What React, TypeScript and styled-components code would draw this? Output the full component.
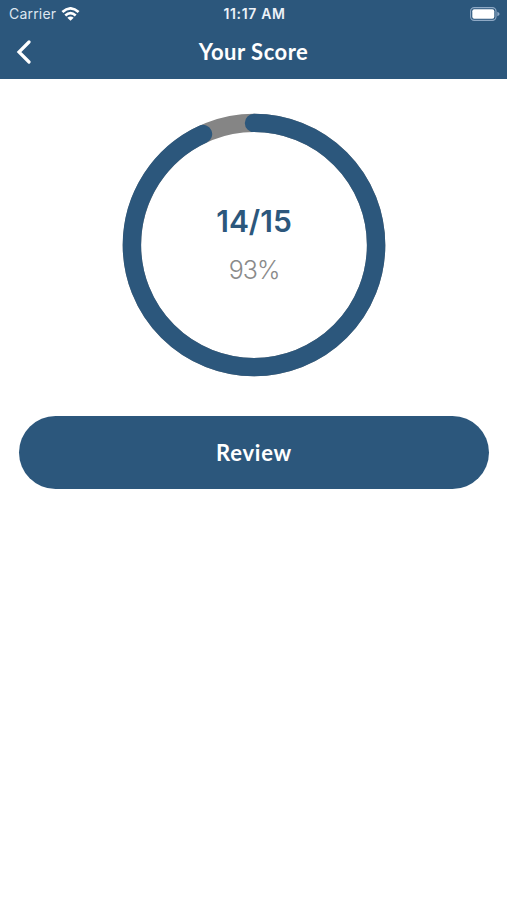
import React from "react";
import styled, { createGlobalStyle } from "styled-components";

const BLUE = "#2c577c";

const GlobalStyle = createGlobalStyle`
  * { box-sizing: border-box; }
  body { margin: 0; background: #fff; }
`;

const Screen = styled.div`
  width: 100%;
  height: 900px;
  background: #fff;
  overflow: hidden;
  font-family: Inter, sans-serif;
`;

const Header = styled.header`
  height: 79px;
  background: ${BLUE};
  color: #fff;
`;

const StatusBar = styled.div`
  display: grid;
  grid-template-columns: 1fr auto 1fr;
  align-items: center;
  height: 27px;
  padding: 0 7px 0 9px;
`;

const Carrier = styled.div`
  display: flex;
  align-items: center;
  gap: 5px;
  color: #dde6f0;
  font-size: 14px;
  letter-spacing: 0.2px;
`;

const Clock = styled.time`
  color: #edf2f8;
  font-size: 14px;
  font-weight: 600;
  letter-spacing: 0.65px;
`;

const BatterySlot = styled.div`
  display: flex;
  justify-content: flex-end;
`;

const NavBar = styled.div`
  display: grid;
  grid-template-columns: 48px 1fr 48px;
  align-items: center;
  height: 50px;
`;

const BackButton = styled.button`
  display: flex;
  padding: 0 0 0 16px;
  border: 0;
  background: none;
`;

const Title = styled.h1`
  margin: 0;
  text-align: center;
  font: 700 22px/30px Lato, sans-serif;
  letter-spacing: 0.5px;
`;

const Content = styled.main`
  display: flex;
  flex-direction: column;
  align-items: center;
  padding: 34px 18px 0 19px;
`;

const Gauge = styled.div`
  display: grid;
  place-items: center;
  width: 264px;
  height: 264px;
  > * { grid-area: 1 / 1; }
`;

const Scores = styled.div`
  display: flex;
  flex-direction: column;
  align-items: center;
  gap: 13px;
`;

const Score = styled.div`
  color: ${BLUE};
  font-size: 30px;
  font-weight: 600;
  line-height: 36px;
`;

const Percent = styled.div`
  color: #8a8a8a;
  font-size: 25px;
  font-weight: 300;
  line-height: 36px;
  letter-spacing: -1px;
`;

const ReviewButton = styled.button`
  width: 100%;
  height: 73px;
  margin-top: 38.5px;
  padding: 2px 0 0;
  border: 0;
  border-radius: 37px;
  background: ${BLUE};
  color: #fff;
  font: 700 22px/30px Lato, sans-serif;
  letter-spacing: 0.8px;
`;

const RADIUS = 122.1;

function Ring({ value }: { value: number }) {
  const length = 2 * Math.PI * RADIUS;
  return (
    <svg width="264" height="264" viewBox="0 0 264 264" fill="none" strokeWidth="18.4">
      <circle cx="132" cy="132" r={RADIUS} stroke="#858585" />
      <circle
        cx="132"
        cy="132"
        r={RADIUS}
        stroke={BLUE}
        strokeLinecap="round"
        strokeDasharray={`${length * value} ${length}`}
        transform="rotate(-90 132 132)"
      />
    </svg>
  );
}

function WifiIcon() {
  return (
    <svg width="19" height="14" viewBox="0 0 18 14" fill="none" stroke="#fff" strokeWidth="2.7">
      <path d="M.9 5.1Q9-2.3 17.1 5.1" />
      <path d="M3.8 8.5Q9 3.8 14.2 8.5" />
      <path d="M9 13.8 5.8 10.8Q9 8.1 12.2 10.8Z" fill="#fff" stroke="none" />
    </svg>
  );
}

function BatteryIcon() {
  return (
    <svg width="30" height="14" viewBox="0 0 30 14">
      <rect x=".6" y=".6" width="25.4" height="12.8" rx="3.6" fill="none" stroke="#8fa9c5" strokeWidth="1.1" />
      <rect x="2.3" y="2.3" width="22" height="9.4" rx="1.9" fill="#fff" />
      <path d="M27.3 4.8Q29.6 5.5 29.6 7T27.3 9.2Z" fill="#8fa9c5" />
    </svg>
  );
}

export default function App() {
  return (
    <Screen>
      <GlobalStyle />
      <Header>
        <StatusBar>
          <Carrier>
            Carrier
            <WifiIcon />
          </Carrier>
          <Clock>11:17 AM</Clock>
          <BatterySlot>
            <BatteryIcon />
          </BatterySlot>
        </StatusBar>
        <NavBar>
          <BackButton aria-label="Back">
            <svg width="16" height="24" viewBox="0 0 16 24" fill="none" stroke="#fff" strokeWidth="3.2" strokeLinecap="round">
              <path d="M13 2 3 12 13 22" />
            </svg>
          </BackButton>
          <Title>Your Score</Title>
        </NavBar>
      </Header>
      <Content>
        <Gauge>
          <Ring value={0.931} />
          <Scores>
            <Score>14/15</Score>
            <Percent>93%</Percent>
          </Scores>
        </Gauge>
        <ReviewButton>Review</ReviewButton>
      </Content>
    </Screen>
  );
}
